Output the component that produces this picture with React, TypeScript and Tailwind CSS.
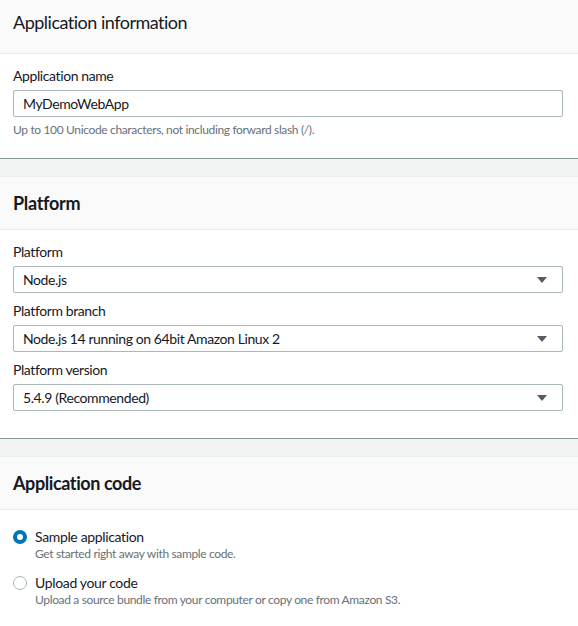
import React from "react";

const font = { fontFamily: "Lato, 'Liberation Sans', Arial, sans-serif" };

function Caret() {
  return (
    <svg width="12" height="8" viewBox="0 0 12 8" className="shrink-0">
      <path d="M1 1 L11 1 L6 7 Z" fill="#545b64" />
    </svg>
  );
}

function Select({ value }: { value: string }) {
  return (
    <div className="h-[27px] flex items-center justify-between border border-[#aab7b8] rounded-[2px] bg-white pl-[9px] pr-[14px] text-[14px] tracking-[-0.4px] text-[#16191f]">
      <span>{value}</span>
      <Caret />
    </div>
  );
}

function Field({ label, value, first }: { label: string; value: string; first?: boolean }) {
  return (
    <div className={first ? "" : "mt-[7px]"}>
      <div className="text-[14px] leading-[22px] tracking-[-0.4px] text-[#16191f] mb-[3px]">{label}</div>
      <Select value={value} />
    </div>
  );
}

function Radio({ checked, label, desc, className }: { checked?: boolean; label: string; desc: string; className?: string }) {
  return (
    <div className={"flex " + (className ?? "")}>
      <div className="w-[22px] pt-[2px] shrink-0">
        {checked ? (
          <div className="w-[14px] h-[14px] rounded-full border-[4px] border-[#0073bb] bg-white" />
        ) : (
          <div className="w-[14px] h-[14px] rounded-full border-[1.5px] border-[#aab7b8] bg-white" />
        )}
      </div>
      <div>
        <div className="text-[14px] leading-[18px] tracking-[-0.35px] text-[#16191f]">{label}</div>
        <div className="text-[12px] leading-[16px] tracking-[-0.35px] text-[#687078]">{desc}</div>
      </div>
    </div>
  );
}

export default function App() {
  return (
    <div style={font} className="w-[578px] h-[626px] overflow-hidden bg-[#f2f3f3]">
      {/* Section 1 */}
      <div className="bg-white border-b border-[#879596]">
        <div className="bg-[#fafafa] border-b border-[#eaeded] px-[13px] pt-[11px] pb-[20px]">
          <h2 className="text-[18px] leading-[22px] tracking-[-0.5px] text-[#16191f]">Application information</h2>
        </div>
        <div className="pl-[13px] pr-[15px] pt-[11px] pb-[19px]">
          <div className="text-[14px] leading-[22px] tracking-[-0.4px] text-[#16191f] mb-[3px]">Application name</div>
          <div className="h-[27px] flex items-center border border-[#aab7b8] rounded-[2px] bg-white pl-[9px] text-[14px] tracking-[-0.4px] text-[#16191f]">
            MyDemoWebApp
          </div>
          <div className="mt-[4px] text-[12px] leading-[18px] tracking-[-0.35px] text-[#687078]">
            Up to 100 Unicode characters, not including forward slash (/).
          </div>
        </div>
      </div>

      {/* Section 2 */}
      <div className="mt-[17px] bg-white border-t border-[#eaeded] border-b border-b-[#879596]">
        <div className="bg-[#fafafa] border-b border-[#eaeded] px-[13px] h-[53px] flex items-center">
          <h2 className="text-[18px] leading-[22px] font-bold tracking-[-0.3px] text-[#16191f]">Platform</h2>
        </div>
        <div className="pl-[13px] pr-[15px] pt-[11px] pb-[27px]">
          <Field first label="Platform" value="Node.js" />
          <Field label="Platform branch" value="Node.js 14 running on 64bit Amazon Linux 2" />
          <Field label="Platform version" value="5.4.9 (Recommended)" />
        </div>
      </div>

      {/* Section 3 */}
      <div className="mt-[17px] bg-white border-t border-[#eaeded]">
        <div className="bg-[#fafafa] border-b border-[#eaeded] px-[13px] h-[53px] flex items-center">
          <h2 className="text-[18px] leading-[22px] font-bold tracking-[-0.4px] text-[#16191f]">Application code</h2>
        </div>
        <div className="px-[13px] pt-[18px] pb-[40px]">
          <Radio checked label="Sample application" desc="Get started right away with sample code." />
          <Radio
            className="mt-[12px]"
            label="Upload your code"
            desc="Upload a source bundle from your computer or copy one from Amazon S3."
          />
        </div>
      </div>
    </div>
  );
}
